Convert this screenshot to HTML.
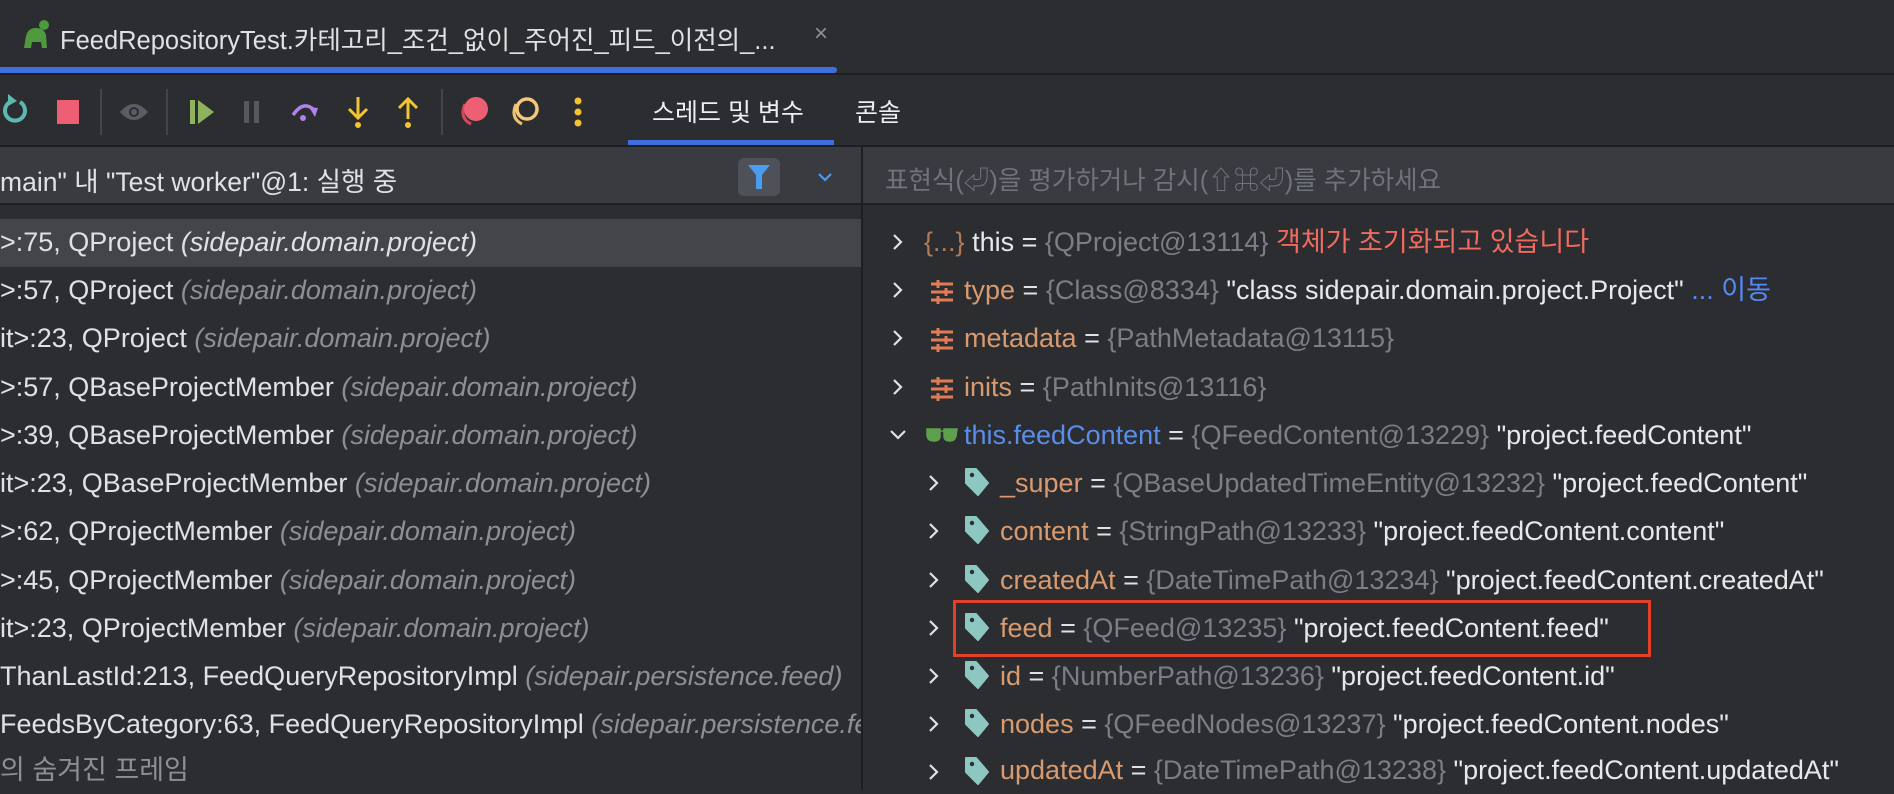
<!DOCTYPE html>
<html><head><meta charset="utf-8"><style>
*{margin:0;padding:0;box-sizing:border-box}
body{width:1894px;height:790px;overflow:hidden;background:#2b2d30;font-family:"Liberation Sans","Noto Sans CJK KR",sans-serif;color:#dfe1e5;position:relative}
.a{position:absolute;white-space:nowrap}
.row{position:absolute;height:48px;line-height:48px;font-size:27px;white-space:nowrap}
.g{color:#7a7e85}
.it{font-style:italic;color:#8c8f94}
.o{color:#d99a70}
.w{color:#e6e8eb}
svg{position:absolute}
</style></head><body>
<div class="a" style="left:0;top:0;width:1894px;height:75px;background:#2b2d30;border-bottom:2px solid #1e1f22"></div>
<svg style="left:20px;top:18px" width="32" height="34" viewBox="0 0 32 34"><path d="M4 30 L6 18 Q8 10 16 10 Q24 10 26 17 L27 30 L22 30 L21 24 L12 24 L11 30Z" fill="#4e9a3c"/><circle cx="24" cy="7" r="5" fill="#4e9a3c"/></svg>
<div class="a" style="left:60px;top:20px;font-size:25.5px;color:#dfe1e5">FeedRepositoryTest.카테고리_조건_없이_주어진_피드_이전의_...</div>
<div class="a" style="left:814px;top:20px;font-size:24px;color:#8c8f94">×</div>
<div class="a" style="left:0;top:67px;width:837px;height:6px;background:#3f6fdc;border-radius:0 3px 3px 0"></div>
<svg style="left:0;top:92px" width="30" height="40" viewBox="0 0 30 40"><path d="M10 10 A10 10 0 1 0 20 10" fill="none" stroke="#5fb8b0" stroke-width="4"/><path d="M8 2 L17 9 L8 14Z" fill="#5fb8b0"/></svg>
<div class="a" style="left:57px;top:100px;width:22px;height:24px;background:#ef5f73"></div>
<div class="a" style="left:100px;top:89px;width:2px;height:46px;background:#43454a"></div>
<svg style="left:119px;top:100px" width="30" height="24" viewBox="0 0 30 24"><path d="M1 12 Q15 -4 29 12 Q15 28 1 12Z" fill="#5a5d63"/><circle cx="15" cy="12" r="5" fill="#2b2d30"/><circle cx="15" cy="12" r="3" fill="#5a5d63"/></svg>
<div class="a" style="left:166px;top:89px;width:2px;height:46px;background:#43454a"></div>
<svg style="left:190px;top:100px" width="24" height="24" viewBox="0 0 24 24"><rect x="0" y="0" width="5" height="24" fill="#8fb35c"/><path d="M8 0 L24 12 L8 24Z" fill="#8fb35c"/></svg>
<svg style="left:244px;top:101px" width="16" height="22" viewBox="0 0 16 22"><rect x="0" y="0" width="5" height="22" fill="#55585d"/><rect x="10" y="0" width="5" height="22" fill="#55585d"/></svg>
<svg style="left:290px;top:99px" width="30" height="26" viewBox="0 0 30 26"><path d="M3 16 Q14 0 25 12" fill="none" stroke="#b183e8" stroke-width="3.5"/><path d="M19 8 L28 9 L25 18Z" fill="#b183e8"/><circle cx="13" cy="19" r="3" fill="#b183e8"/></svg>
<svg style="left:346px;top:97px" width="24" height="32" viewBox="0 0 24 32"><path d="M12 0 V20 M3 12 L12 21 L21 12" fill="none" stroke="#f3c332" stroke-width="3"/><circle cx="12" cy="28" r="3" fill="#f3c332"/></svg>
<svg style="left:396px;top:97px" width="24" height="32" viewBox="0 0 24 32"><path d="M12 3 V22 M3 11 L12 2 L21 11" fill="none" stroke="#f3c332" stroke-width="3"/><circle cx="12" cy="28" r="3" fill="#f3c332"/></svg>
<div class="a" style="left:441px;top:89px;width:2px;height:46px;background:#43454a"></div>
<svg style="left:459px;top:96px" width="30" height="32" viewBox="0 0 30 32"><path d="M6 8 Q0 22 12 28" fill="none" stroke="#d14a5c" stroke-width="3"/><circle cx="17" cy="13" r="12" fill="#ef5f73"/></svg>
<svg style="left:510px;top:96px" width="30" height="32" viewBox="0 0 30 32"><path d="M6 8 Q0 22 12 28" fill="none" stroke="#f0c070" stroke-width="3"/><circle cx="17" cy="13" r="10" fill="none" stroke="#f3c87a" stroke-width="3.5"/></svg>
<svg style="left:573px;top:97px" width="10" height="30" viewBox="0 0 10 30"><circle cx="5" cy="4" r="3.5" fill="#f3c332"/><circle cx="5" cy="15" r="3.5" fill="#f3c332"/><circle cx="5" cy="26" r="3.5" fill="#f3c332"/></svg>
<div class="a" style="left:652px;top:93px;font-size:25px;color:#eceef1">스레드 및 변수</div>
<div class="a" style="left:855px;top:93px;font-size:25px;color:#eceef1">콘솔</div>
<div class="a" style="left:628px;top:140px;width:206px;height:5px;background:#3f6fdc"></div>
<div class="a" style="left:0;top:145px;width:1894px;height:2px;background:#1e1f22"></div>
<div class="a" style="left:0;top:147px;width:861px;height:58px;background:#393b40;border-bottom:2px solid #1e1f22"></div>
<div class="a" style="left:0;top:160px;font-size:26.5px;color:#dfe1e5">main" 내 "Test worker"@1: 실행 중</div>
<div class="a" style="left:738px;top:158px;width:42px;height:38px;background:#4e5157;border-radius:6px"></div>
<svg style="left:747px;top:164px" width="24" height="26" viewBox="0 0 24 26"><path d="M1 1 H23 L15 11 V25 H9 V11Z" fill="#4a9cf0"/></svg>
<svg style="left:817px;top:172px" width="16" height="10" viewBox="0 0 16 10"><path d="M2 2 L8 8 L14 2" fill="none" stroke="#4a9cf0" stroke-width="2.2"/></svg>
<div class="a" style="left:861px;top:147px;width:2px;height:643px;background:#1e1f22"></div>
<div class="a" style="left:863px;top:147px;width:1031px;height:58px;background:#393b40;border-bottom:2px solid #1e1f22"></div>
<div class="a" style="left:885px;top:160px;font-size:25.5px;color:#6f737a">표현식(⏎)을 평가하거나 감시(⇧⌘⏎)를 추가하세요</div>
<div class="a" style="left:0;top:219px;width:861px;height:48px;background:#43454a"></div>
<div class="row" style="left:0;top:218px">&gt;:75, QProject <span class="it" style="color:#dfe1e5">(sidepair.domain.project)</span></div>
<div class="row" style="left:0;top:266px">&gt;:57, QProject <span class="it">(sidepair.domain.project)</span></div>
<div class="row" style="left:0;top:314px">it&gt;:23, QProject <span class="it">(sidepair.domain.project)</span></div>
<div class="row" style="left:0;top:363px">&gt;:57, QBaseProjectMember <span class="it">(sidepair.domain.project)</span></div>
<div class="row" style="left:0;top:411px">&gt;:39, QBaseProjectMember <span class="it">(sidepair.domain.project)</span></div>
<div class="row" style="left:0;top:459px">it&gt;:23, QBaseProjectMember <span class="it">(sidepair.domain.project)</span></div>
<div class="row" style="left:0;top:507px">&gt;:62, QProjectMember <span class="it">(sidepair.domain.project)</span></div>
<div class="row" style="left:0;top:556px">&gt;:45, QProjectMember <span class="it">(sidepair.domain.project)</span></div>
<div class="row" style="left:0;top:604px">it&gt;:23, QProjectMember <span class="it">(sidepair.domain.project)</span></div>
<div class="row" style="left:0;top:652px">ThanLastId:213, FeedQueryRepositoryImpl <span class="it">(sidepair.persistence.feed)</span></div>
<div class="row" style="left:0;top:700px;width:861px;overflow:hidden">FeedsByCategory:63, FeedQueryRepositoryImpl <span class="it">(sidepair.persistence.feed)</span></div>
<div class="row" style="left:0;top:746px;color:#8c8f94">의 숨겨진 프레임</div>
<svg width="0" height="0"><defs>
<symbol id="ch" viewBox="0 0 14 20"><path d="M3 3 L10 10 L3 17" fill="none" stroke="#dfe1e5" stroke-width="2.2"/></symbol>
<symbol id="sl" viewBox="0 0 26 26"><path d="M2 5H24M2 13H24M2 21H24" stroke="#e07b53" stroke-width="3"/><path d="M9 1V9M17 9V17M9 17V25" stroke="#e07b53" stroke-width="3"/></symbol>
<symbol id="tg" viewBox="0 0 28 30"><path d="M4 2 H14 L26 16 L16 28 L4 16Z" fill="#8cc7c1" stroke="#8cc7c1" stroke-linejoin="round" stroke-width="2"/><circle cx="10" cy="8" r="2.2" fill="#2b2d30"/></symbol>
</defs></svg>
<svg style="left:891px;top:232px" width="14" height="20"><use href="#ch"/></svg>
<div class="row" style="left:924px;top:218px"><span style="color:#b07a55">{...}</span> <span class="w">this</span> <span class="w">=</span> <span class="g">{QProject@13114}</span> <span style="color:#f06a60">객체가 초기화되고 있습니다</span></div>
<svg style="left:891px;top:280px" width="14" height="20"><use href="#ch"/></svg>
<svg style="left:929px;top:279px" width="26" height="26"><use href="#sl"/></svg>
<div class="row" style="left:964px;top:266px"><span class="o">type</span> = <span class="g">{Class@8334}</span> <span class="w">"class sidepair.domain.project.Project"</span> <span style="color:#548af7">... 이동</span></div>
<svg style="left:891px;top:328px" width="14" height="20"><use href="#ch"/></svg>
<svg style="left:929px;top:327px" width="26" height="26"><use href="#sl"/></svg>
<div class="row" style="left:964px;top:314px"><span class="o">metadata</span> = <span class="g">{PathMetadata@13115}</span></div>
<svg style="left:891px;top:377px" width="14" height="20"><use href="#ch"/></svg>
<svg style="left:929px;top:376px" width="26" height="26"><use href="#sl"/></svg>
<div class="row" style="left:964px;top:363px"><span class="o">inits</span> = <span class="g">{PathInits@13116}</span></div>
<svg style="left:888px;top:428px" width="20" height="14" viewBox="0 0 20 14"><path d="M3 3 L10 10 L17 3" fill="none" stroke="#dfe1e5" stroke-width="2.2"/></svg>
<svg style="left:926px;top:427px" width="32" height="16" viewBox="0 0 32 16"><path d="M1 2 H14 V9 Q14 14 8 14 Q2 14 1 9Z M18 2 H31 L30 9 Q29 14 24 14 Q18 14 18 9Z M14 4 H18" fill="#5fa04e" stroke="#5fa04e" stroke-width="1.5"/></svg>
<div class="row" style="left:964px;top:411px"><span style="color:#5a8de8">this.feedContent</span> = <span class="g">{QFeedContent@13229}</span> <span class="w">"project.feedContent"</span></div>
<svg style="left:927px;top:473px" width="14" height="20"><use href="#ch"/></svg>
<svg style="left:962px;top:467px" width="28" height="30"><use href="#tg"/></svg>
<div class="row" style="left:1000px;top:459px"><span class="o">_super</span> = <span class="g">{QBaseUpdatedTimeEntity@13232}</span> <span class="w">"project.feedContent"</span></div>
<svg style="left:927px;top:521px" width="14" height="20"><use href="#ch"/></svg>
<svg style="left:962px;top:515px" width="28" height="30"><use href="#tg"/></svg>
<div class="row" style="left:1000px;top:507px"><span class="o">content</span> = <span class="g">{StringPath@13233}</span> <span class="w">"project.feedContent.content"</span></div>
<svg style="left:927px;top:570px" width="14" height="20"><use href="#ch"/></svg>
<svg style="left:962px;top:564px" width="28" height="30"><use href="#tg"/></svg>
<div class="row" style="left:1000px;top:556px"><span class="o">createdAt</span> = <span class="g">{DateTimePath@13234}</span> <span class="w">"project.feedContent.createdAt"</span></div>
<svg style="left:927px;top:618px" width="14" height="20"><use href="#ch"/></svg>
<svg style="left:962px;top:612px" width="28" height="30"><use href="#tg"/></svg>
<div class="row" style="left:1000px;top:604px"><span class="o">feed</span> = <span class="g">{QFeed@13235}</span> <span class="w">"project.feedContent.feed"</span></div>
<div class="a" style="left:953px;top:600px;width:698px;height:57px;border:3px solid #e3402a"></div>
<svg style="left:927px;top:666px" width="14" height="20"><use href="#ch"/></svg>
<svg style="left:962px;top:660px" width="28" height="30"><use href="#tg"/></svg>
<div class="row" style="left:1000px;top:652px"><span class="o">id</span> = <span class="g">{NumberPath@13236}</span> <span class="w">"project.feedContent.id"</span></div>
<svg style="left:927px;top:714px" width="14" height="20"><use href="#ch"/></svg>
<svg style="left:962px;top:708px" width="28" height="30"><use href="#tg"/></svg>
<div class="row" style="left:1000px;top:700px"><span class="o">nodes</span> = <span class="g">{QFeedNodes@13237}</span> <span class="w">"project.feedContent.nodes"</span></div>
<svg style="left:927px;top:762px" width="14" height="20"><use href="#ch"/></svg>
<svg style="left:962px;top:756px" width="28" height="30"><use href="#tg"/></svg>
<div class="row" style="left:1000px;top:746px"><span class="o">updatedAt</span> = <span class="g">{DateTimePath@13238}</span> <span class="w">"project.feedContent.updatedAt"</span></div>
</body></html>
